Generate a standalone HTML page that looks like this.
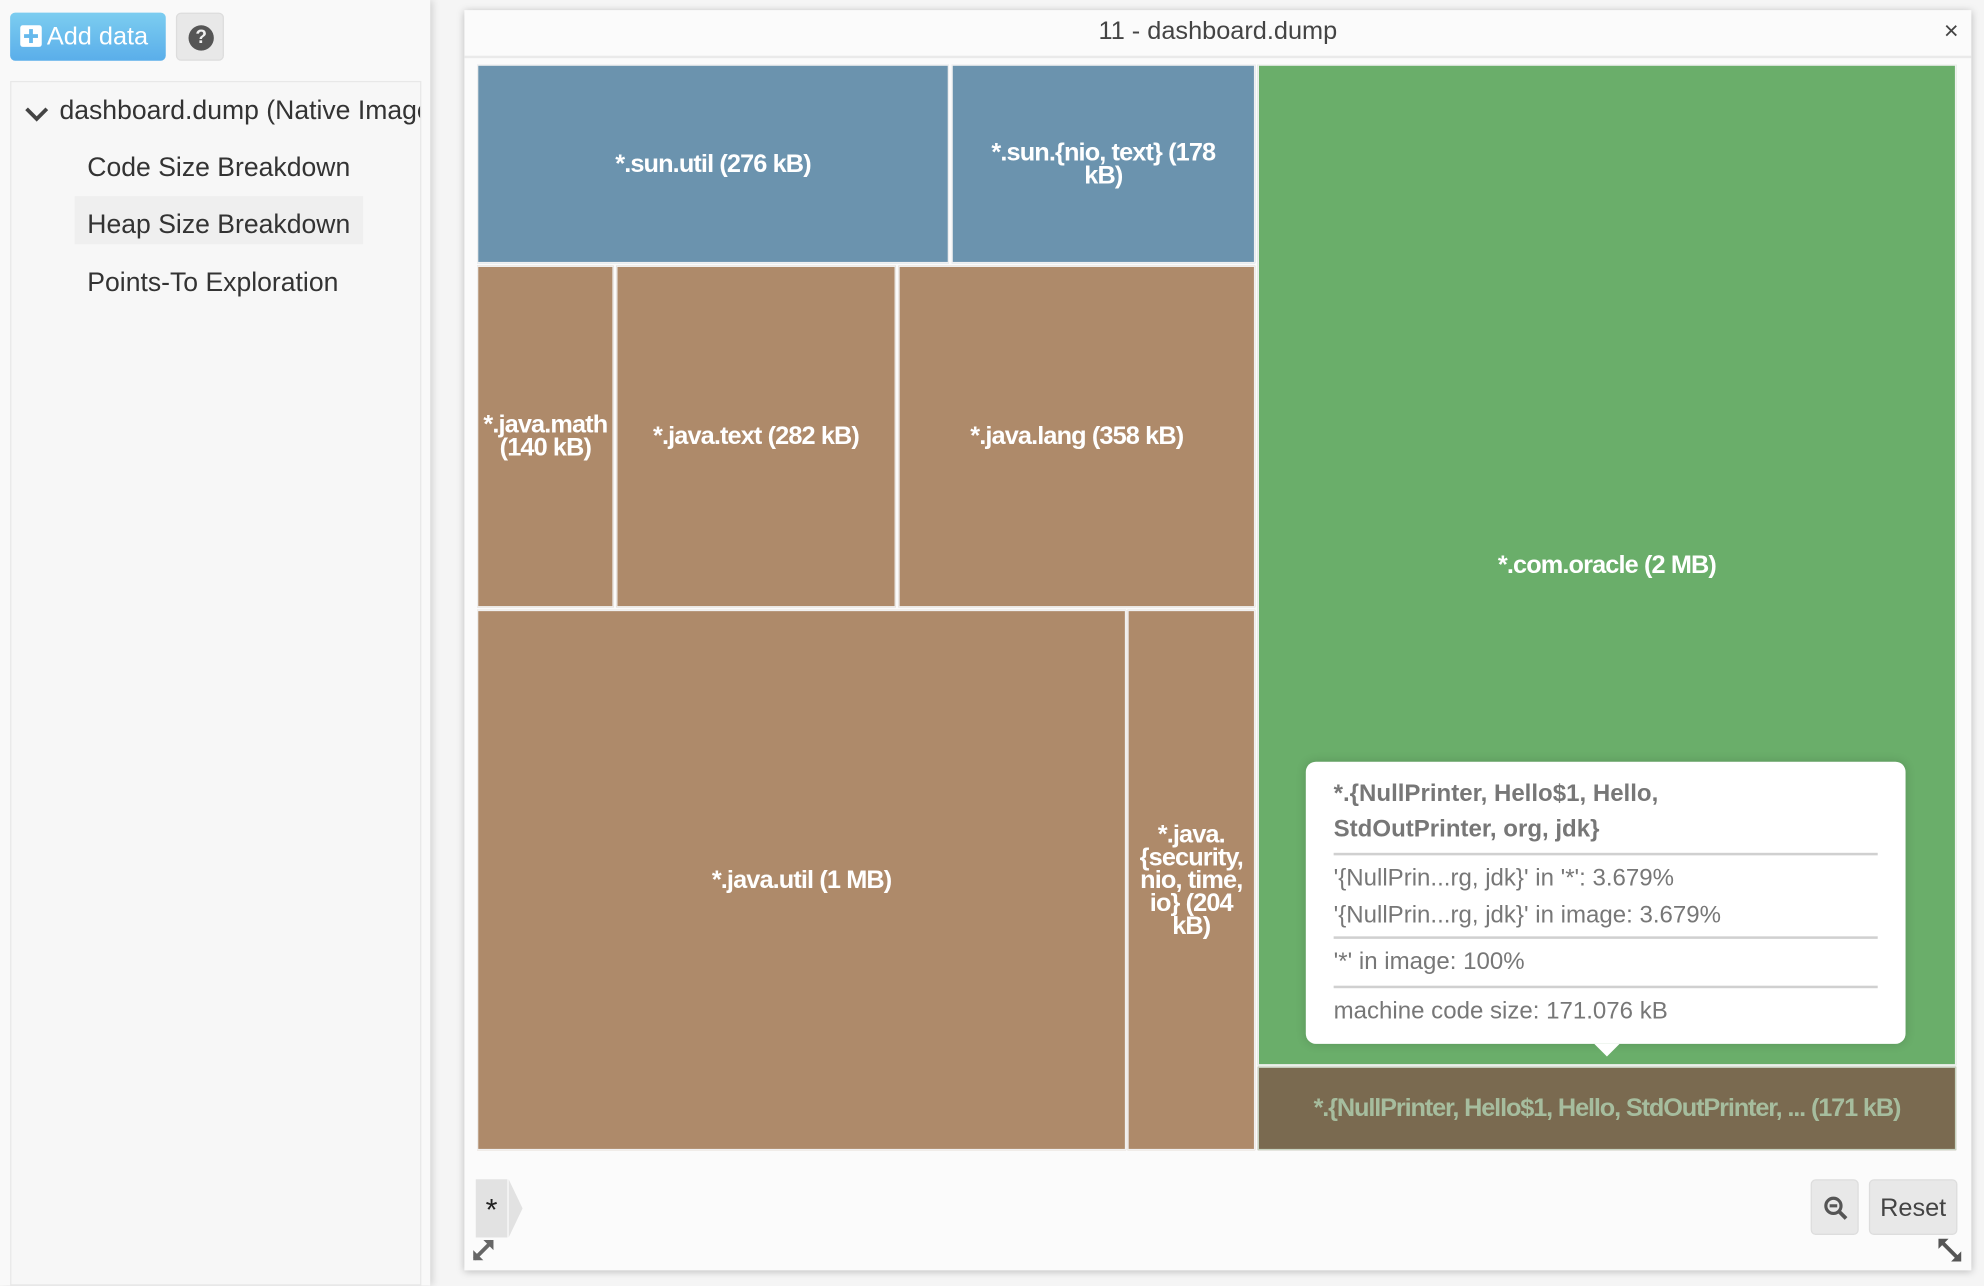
<!DOCTYPE html>
<html><head><meta charset="utf-8"><style>
html,body{margin:0;padding:0;width:1984px;height:1286px;overflow:hidden;background:#f5f5f5;}
#s{position:absolute;left:0;top:0;width:1568px;height:1016px;transform:scale(1.26531);transform-origin:0 0;font-family:"Liberation Sans",sans-serif;}
.a{position:absolute;box-sizing:border-box;}
.t{display:flex;align-items:center;justify-content:center;text-align:center;color:#fff;font-weight:bold;font-size:20px;line-height:18px;letter-spacing:-0.7px;border:1px solid #f0f0f0;}
.b{background:#6b93ae}.r{background:#ae8a6a}
.tt{color:#777;font-size:19px;}
.hr{height:2px;background:#d0d0d0;margin:0 22px;}
</style></head><body><div id="s">
<div class="a" style="left:0;top:0;width:340px;height:1016px;background:#f9f9f9;box-shadow:2px 0 6px rgba(0,0,0,.15)"></div>
<div class="a" style="left:8px;top:10px;width:123px;height:38px;border-radius:4px;background:linear-gradient(#7ccdf0,#5aaeea);color:#fff;font-size:20px;line-height:38px;padding-left:8px">
<span style="display:inline-block;width:17px;height:17px;background:#fff;border-radius:2px;vertical-align:-2px;position:relative;margin-right:4px"><span style="position:absolute;left:7px;top:3px;width:3px;height:11px;background:#66b9ec"></span><span style="position:absolute;left:3px;top:7px;width:11px;height:3px;background:#66b9ec"></span></span>Add data</div>
<div class="a" style="left:139px;top:10px;width:38px;height:38px;border-radius:4px;background:#e8e8e8;border:1px solid #ddd"><div style="position:absolute;left:9px;top:9px;width:20px;height:20px;border-radius:50%;background:#555;color:#f0f0f0;font-weight:bold;font-size:15px;line-height:20px;text-align:center">?</div></div>
<div class="a" style="left:8px;top:64px;width:325px;height:952px;background:#f7f7f7;border:1px solid #e8e8e8;overflow:hidden;color:#333;font-size:21px">
<div class="a" style="left:10px;top:14px;width:18px;height:18px;"><svg width="20" height="14"><path d="M2 3 L10 11 L18 3" stroke="#444" stroke-width="3" fill="none"/></svg></div>
<div class="a" style="left:38px;top:11px;white-space:nowrap">dashboard.dump (Native Image)</div>
<div class="a" style="left:60px;top:56px">Code Size Breakdown</div>
<div class="a" style="left:50px;top:90px;width:228px;height:38px;background:#efefef"></div>
<div class="a" style="left:60px;top:101px">Heap Size Breakdown</div>
<div class="a" style="left:60px;top:147px">Points-To Exploration</div>
</div>
<div class="a" style="left:367px;top:8px;width:1191px;height:996px;background:#fbfbfb;box-shadow:0 1px 6px rgba(0,0,0,.25)">
<div class="a" style="left:0;top:0;width:100%;height:38px;border-bottom:2px solid #eaeaea;text-align:center;font-size:20px;line-height:34px;color:#444">11 - dashboard.dump<span style="position:absolute;right:10px;top:0;font-size:20px">×</span></div>
</div>
<div class="a t b" style="left:377px;top:51px;width:373px;height:157px">*.sun.util (276 kB)</div>
<div class="a t b" style="left:752px;top:51px;width:240px;height:157px;padding:0 16px">*.sun.{nio, text} (178 kB)</div>
<div class="a t r" style="left:377px;top:210px;width:108px;height:270px;overflow:hidden;white-space:normal">*.java.math (140 kB)</div>
<div class="a t r" style="left:487px;top:210px;width:221px;height:270px">*.java.text (282 kB)</div>
<div class="a t r" style="left:710px;top:210px;width:282px;height:270px">*.java.lang (358 kB)</div>
<div class="a t r" style="left:377px;top:482px;width:513px;height:427px">*.java.util (1 MB)</div>
<div class="a t r" style="left:891px;top:482px;width:101px;height:427px;padding:0 3px">*.java.{security, nio, time, io} (204 kB)</div>
<div class="a t" style="left:994px;top:51px;width:552px;height:791px;background:#6aae6a">*.com.oracle (2 MB)</div>
<div class="a t" style="left:994px;top:843px;width:552px;height:66px;background:#7a6a50;color:#a6bd9e;border-color:#c8d4c2;letter-spacing:-0.9px">*.{NullPrinter, Hello$1, Hello, StdOutPrinter, ... (171 kB)</div>
<div class="a" style="left:1032px;top:602px;width:474px;height:223px;background:#fff;border-radius:8px;box-shadow:0 0 8px rgba(0,0,0,.15)">
<div class="tt" style="font-weight:bold;padding:12px 22px 4px;line-height:28px">*.{NullPrinter, Hello$1, Hello,<br>StdOutPrinter, org, jdk}</div>
<div class="hr"></div>
<div class="tt" style="padding:4px 22px 2px;line-height:29px">'{NullPrin...rg, jdk}' in '*': 3.679%<br>'{NullPrin...rg, jdk}' in image: 3.679%</div>
<div class="hr"></div>
<div class="tt" style="padding:6px 22px 5px;line-height:26px">'*' in image: 100%</div>
<div class="hr"></div>
<div class="tt" style="padding:6px 22px;line-height:26px">machine code size: 171.076 kB</div>
<div style="position:absolute;left:228px;bottom:-10px;width:0;height:0;border-left:10px solid transparent;border-right:10px solid transparent;border-top:10px solid #fff"></div>
</div>
<div class="a" style="left:376px;top:932px;width:25px;height:46px;background:#e2e2e2;font-size:24px;line-height:50px;text-align:center;color:#222">*</div>
<div class="a" style="left:402px;top:932px;width:0;height:0;border-top:23px solid transparent;border-bottom:23px solid transparent;border-left:11px solid #e2e2e2"></div>
<svg class="a" style="left:372px;top:976px" width="22" height="22"><path d="M3 19 L17 5" stroke="#666" stroke-width="3"/><path d="M2 12 V20 H10Z M10 4 H18 V12Z" fill="#666"/></svg>
<div class="a" style="left:1431px;top:932px;width:38px;height:44px;background:#e8e8e8;border:1px solid #ddd;border-radius:4px"><svg style="position:absolute;left:9px;top:12px" width="20" height="20"><circle cx="8" cy="8" r="6" stroke="#555" stroke-width="2.5" fill="none"/><path d="M5 8 H11" stroke="#555" stroke-width="2.5"/><path d="M12.5 12.5 L18 18" stroke="#555" stroke-width="3"/></svg></div>
<div class="a" style="left:1477px;top:932px;width:70px;height:44px;background:#e8e8e8;border:1px solid #ddd;border-radius:4px;font-size:20px;line-height:44px;text-align:center;color:#444">Reset</div>
<svg class="a" style="left:1530px;top:977px" width="22" height="22"><path d="M4 4 L18 18" stroke="#555" stroke-width="3"/><path d="M2 2 H10 L2 10Z M20 20 H12 L20 12Z" fill="#555"/></svg>
</div></body></html>
